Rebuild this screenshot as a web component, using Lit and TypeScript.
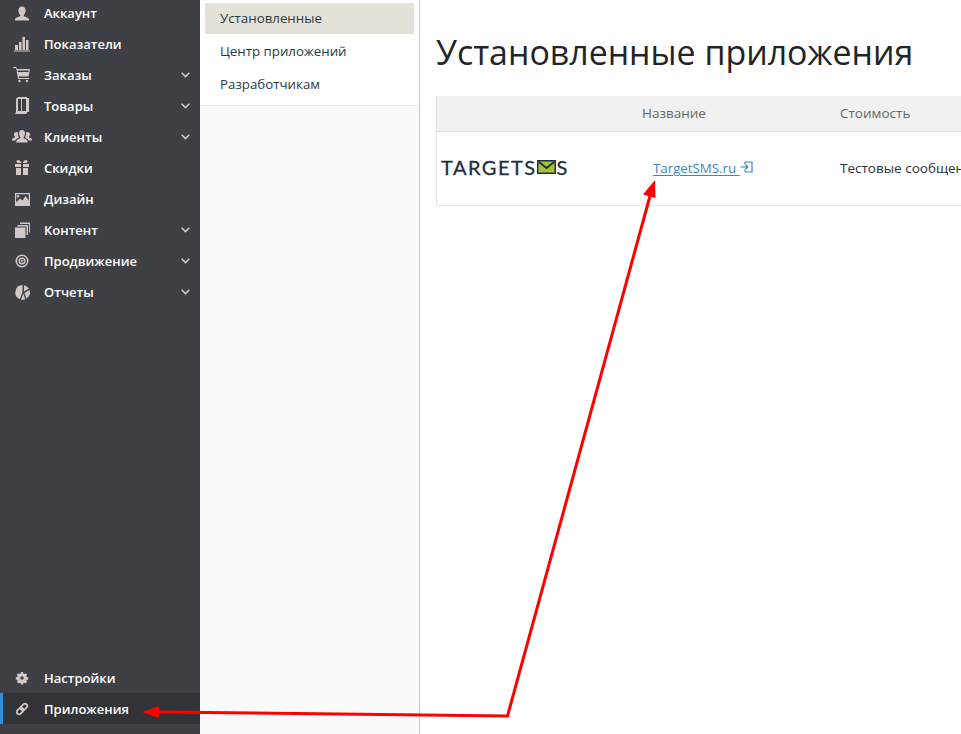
import { LitElement, html, css, svg } from "lit";
import { customElement } from "lit/decorators.js";

const icons: Record<string, unknown> = {
  user: svg`<path transform="translate(0 2.500)" d="M10 1c2.400 0 3.600 1.800 3.600 4 0 2-1 3.600-1.800 4.400v1.400c2 .8 5 1.400 5.200 3.200v1H3v-1c.2-1.800 3.200-2.400 5.200-3.200V9.400C7.400 8.600 6.400 7 6.400 5 6.400 2.800 7.600 1 10 1z"/>`,
  chart: svg`<path d="M3 11h3v5H3zM7 8h2.500v8H7zM10.500 3H13v13h-2.500zM14 6h2.500v10H14zM2 16.500h16v1H2z"/>`,
  cart: svg`<path fill-rule="evenodd" d="M1 2h3l1 2h13l-1.500 7.500H6.500L7 13h10v1H6L4.500 4.500 3.500 3H1zM5.500 5.500l.3 1.500h10.700l.3-1.500z"/><circle cx="7.500" cy="16" r="1.200"/><circle cx="15" cy="16" r="1.200"/>`,
  goods: svg`<path fill-rule="evenodd" d="M4 3l2-2h9v1h2v14h-2v1l-1 1H3l1-2zM6 3v12h3V3zm4 0v12h4V3z"/>`,
  users: svg`<path d="M10 3c2 0 3 1.500 3 3.400 0 1.600-.7 2.800-1.400 3.500v1.300c1.800.7 3.900 1.300 4 3v1.300H4.400v-1.300c.1-1.700 2.200-2.300 4-3V9.900C7.700 9.200 7 8 7 6.400 7 4.500 8 3 10 3z"/><path d="M4.500 5c.7 0 1.300.2 1.700.6-.5 1.500-.2 3.400.7 4.700v.5c-1.500.6-3 1.200-3.500 2.700H0v-1c.1-1.200 1.600-1.600 2.900-2.100v-.9C2.300 9.100 1.900 8.200 1.900 7.300 1.900 6 2.900 5 4.500 5zM15.500 5c1.600 0 2.600 1 2.600 2.300 0 .9-.4 1.800-1 2.200v.9c1.300.5 2.800.9 2.900 2.100v1h-3.400c-.5-1.500-2-2.100-3.500-2.700v-.5c.9-1.300 1.200-3.200.7-4.700.4-.4 1-.6 1.700-.6z"/>`,
  gift: svg`<path d="M3 6h6v3H3zM11 6h6v3h-6zM4 10h5v7H4zM11 10h5v7h-5zM6 2c1.500 0 3 1.500 3.500 3H6.500C5 5 4.500 4 4.500 3.400 4.500 2.600 5.200 2 6 2zM14 2c-1.500 0-3 1.500-3.500 3h3C15 5 15.500 4 15.500 3.400 15.500 2.600 14.800 2 14 2z"/>`,
  image: svg`<path fill-rule="evenodd" d="M3 4h15v13H3zm1.200 1.200v8.300l3.800-4 2.500 2 3-4.500 3.300 4.500V5.200zM6 6a1.300 1.300 0 1 1 0 2.600A1.300 1.300 0 0 1 6 6z"/>`,
  pages: svg`<path d="M3 7.500h10.500V18H3z"/><path d="M5.500 5H16v10h-1.500V6.500h-9zM8 2.500h10v10h-1V4H8z"/>`,
  target: svg`<path fill-rule="evenodd" d="M10 3.500a6.500 6.500 0 1 1 0 13 6.500 6.500 0 0 1 0-13zm0 1.500a5 5 0 1 0 0 10 5 5 0 0 0 0-10zm0 1.500a3.500 3.500 0 1 1 0 7 3.500 3.500 0 0 1 0-7zm0 1.500a2 2 0 1 0 0 4 2 2 0 0 0 0-4zm0 1a1 1 0 1 1 0 2 1 1 0 0 1 0-2z"/>`,
  pie: svg`<path d="M10.500 3v7l-2.700 7.200A7.400 7.400 0 0 1 10.500 3z"/><path d="M12 3.200a7.400 7.400 0 0 1 5 3.400L12 9.500zM17.500 8a7.400 7.400 0 0 1-3 8.500L12.300 11z"/><path d="M11.200 11.500l2.200 5.700a7.400 7.400 0 0 1-4.400.500z"/>`,
  gear: svg`<path fill-rule="evenodd" d="M8.500 3h3l.4 2 1.500.7 1.800-1.100 2.100 2.100-1.100 1.800.7 1.500 2 .4v3l-2 .4-.7 1.500 1.100 1.800-2.100 2.100-1.800-1.100-1.500.7-.4 2h-3l-.4-2-1.500-.7-1.800 1.100-2.100-2.100 1.100-1.800-.7-1.500-2-.4v-3l2-.4.7-1.500-1.100-1.800 2.100-2.100 1.800 1.100 1.500-.7zM10 9a2.500 2.500 0 1 0 0 5 2.500 2.500 0 0 0 0-5z" transform="translate(3 2) scale(.7)"/>`,
  link: svg`<g fill="none" stroke="currentColor" stroke-width="1.700" transform="rotate(45 10 10)"><rect x="7.700" y="3.500" width="4.600" height="7.500" rx="2.300"/><rect x="7.700" y="9" width="4.600" height="7.500" rx="2.300"/></g>`,
};

const topItems = [
  { icon: "user", label: "Аккаунт" },
  { icon: "chart", label: "Показатели" },
  { icon: "cart", label: "Заказы", more: true },
  { icon: "goods", label: "Товары", more: true },
  { icon: "users", label: "Клиенты", more: true },
  { icon: "gift", label: "Скидки" },
  { icon: "image", label: "Дизайн" },
  { icon: "pages", label: "Контент", more: true },
  { icon: "target", label: "Продвижение", more: true },
  { icon: "pie", label: "Отчеты", more: true },
];

@customElement("app-root")
export class AppRoot extends LitElement {
  static styles = css`
    :host {
      display: flex;
      position: relative;
      width: 961px;
      height: 734px;
      overflow: hidden;
      background: #fff;
      font-family: "Open Sans", "Noto Sans", sans-serif;
    }

    .sidebar {
      flex: 0 0 200px;
      display: flex;
      flex-direction: column;
      justify-content: space-between;
      background: #3e4045;
      padding-bottom: 10px;
      box-sizing: border-box;
    }

    .nav {
      display: flex;
      flex-direction: column;
      margin-top: -3px;
    }

    .nav-item {
      display: flex;
      align-items: center;
      height: 31px;
      padding-left: 12px;
      color: #fff;
      font-size: 13px;
      font-weight: 600;
      box-sizing: border-box;
    }

    .nav-item.active {
      background: #323337;
      border-left: 3px solid #2f8fdc;
      padding-left: 9px;
    }

    .nav-item svg.icon {
      width: 20px;
      height: 20px;
      margin-right: 12px;
      fill: #d3c8c4;
      color: #d3c8c4;
    }

    .nav-item .chev {
      margin-left: auto;
      margin-right: 10px;
      width: 9px;
      height: 6px;
      fill: none;
      stroke: #c6d0d4;
      stroke-width: 1.500;
    }

    .subnav {
      flex: 0 0 220px;
      box-sizing: border-box;
      background: #fafafa;
      border-right: 1px solid #c9c9c9;
    }

    .subnav-list {
      display: flex;
      flex-direction: column;
      gap: 2px;
      padding: 3px 5px 5px;
      background: #fff;
      border-bottom: 1px solid #eeeeee;
      height: 106px;
      box-sizing: border-box;
    }

    .subnav-item {
      height: 31px;
      line-height: 31px;
      padding-left: 15px;
      color: #2b3a46;
      font-size: 13.300px;
    }

    .subnav-item.selected {
      background: #e4e1d9;
    }

    .main {
      flex: 1;
      min-width: 0;
      padding: 29px 0 0 16px;
    }

    h1 {
      margin: 0 0 21px;
      font-size: 33.900px;
      line-height: 46px;
      font-weight: 400;
      color: #1f2429;
    }

    .table {
      border-left: 1px solid #e2e2e2;
      border-bottom: 1px solid #eaeaea;
      overflow: hidden;
    }

    .row {
      display: grid;
      grid-template-columns: 205px 198px 400px;
      align-items: center;
      white-space: nowrap;
    }

    .row.head {
      height: 36px;
      padding-bottom: 1px;
      background: #f1f1f1;
      border-bottom: 1px solid #dedede;
      color: #666;
      font-size: 13.500px;
      font-weight: 500;
      box-sizing: border-box;
    }

    .row.body {
      height: 73px;
      padding-bottom: 1px;
      box-sizing: border-box;
      color: #26323c;
      font-size: 13.500px;
    }

    .logo {
      display: flex;
      align-items: center;
      padding: 0 0 2px 4px;
      color: #1c2f3e;
      font-family: Lato, "Open Sans", sans-serif;
      font-size: 20px;
      font-weight: 400;
      letter-spacing: 1.500px;
      line-height: 1;
      -webkit-text-stroke: 0.3px #1c2f3e;
    }

    .logo svg {
      width: 19px;
      height: 14px;
      margin-right: 1px;
    }

    .app-link {
      display: flex;
      align-items: center;
      padding-left: 11px;
      color: #3a86c8;
      font-size: 13.300px;
    }

    .app-link span {
      text-decoration: underline;
      text-underline-offset: 2px;
    }

    .app-link svg {
      width: 13px;
      height: 12px;
      margin-top: -2px;
      fill: none;
      stroke: #3a86c8;
      stroke-width: 1.200;
    }

    .arrows {
      position: absolute;
      left: 0;
      top: 0;
      width: 961px;
      height: 734px;
      pointer-events: none;
    }
  `;

  navItem(icon: string, label: string, more = false, active = false) {
    return html`
      <div class="nav-item ${active ? "active" : ""}">
        <svg class="icon" viewBox="0 0 20 20">${icons[icon]}</svg>
        <span>${label}</span>
        ${more
          ? html`<svg class="chev" viewBox="0 0 9 6"><path d="M.7.8l3.800 3.800L8.300.8" /></svg>`
          : ""}
      </div>
    `;
  }

  render() {
    return html`
      <aside class="sidebar">
        <nav class="nav">
          ${topItems.map((i) => this.navItem(i.icon, i.label, i.more))}
        </nav>
        <nav>
          ${this.navItem("gear", "Настройки")}
          ${this.navItem("link", "Приложения", false, true)}
        </nav>
      </aside>

      <div class="subnav">
        <div class="subnav-list">
          <div class="subnav-item selected">Установленные</div>
          <div class="subnav-item">Центр приложений</div>
          <div class="subnav-item">Разработчикам</div>
        </div>
      </div>

      <main class="main">
        <h1>Установленные приложения</h1>
        <div class="table">
          <div class="row head">
            <div></div>
            <div>Название</div>
            <div>Стоимость</div>
          </div>
          <div class="row body">
            <div class="logo">
              TARGETS<svg viewBox="0 0 19 14">
                <rect width="19" height="14" fill="#1c2f3e" />
                <rect x="1.500" y="1.500" width="16" height="11" fill="#a5c62c" />
                <path d="M2 2l7.500 6L17 2" fill="none" stroke="#1c2f3e" stroke-width="1.800" />
              </svg>S
            </div>
            <div class="app-link">
              <span>TargetSMS.ru&nbsp;</span>
              <svg viewBox="0 0 13 12">
                <path d="M5 1h7v10H5M5 1v2.500M5 11V8.500M.5 6h7M5.500 3.800L7.800 6 5.500 8.200" />
              </svg>
            </div>
            <div>Тестовые сообщения</div>
          </div>
        </div>
      </main>

      <svg class="arrows" viewBox="0 0 961 734">
        <path d="M158 712L507.500 716L650 196" fill="none" stroke="#ff0000" stroke-width="3" />
        <path d="M142 712l17-6v12zM655 180l.5 18-12.500-3.500z" fill="#ff0000" />
      </svg>
    `;
  }
}
